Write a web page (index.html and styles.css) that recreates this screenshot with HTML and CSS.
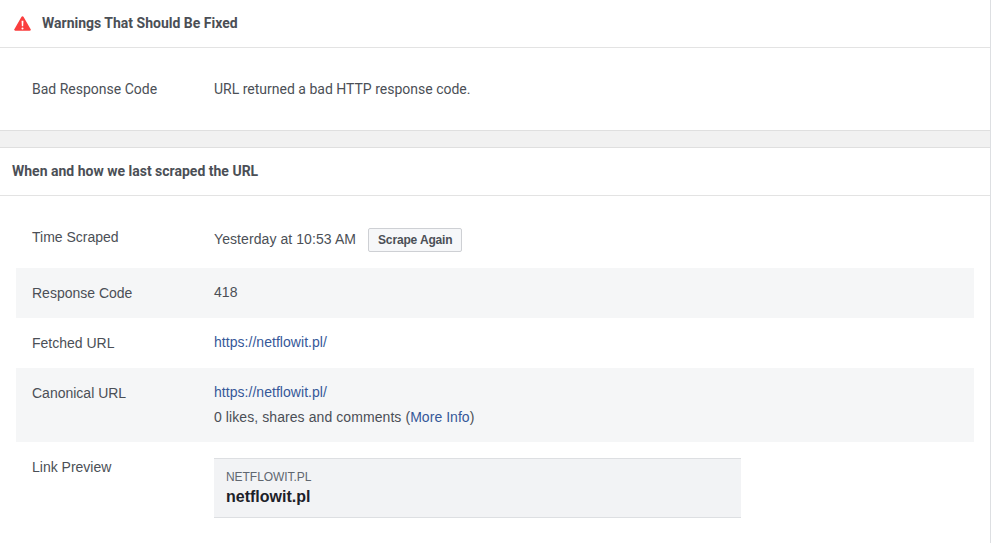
FILE: index.html
```html
<!DOCTYPE html>
<html lang="en">
<head>
<meta charset="utf-8">
<title>Sharing Debugger</title>
<link rel="stylesheet" href="styles.css">
</head>
<body>
<main class="panel">
  <section class="card">
    <h2 class="card-head warn-head">
      <svg class="warn-icon" width="17" height="15" viewBox="0 0 18 16" aria-hidden="true">
        <path fill="#fa3e3e" fill-rule="evenodd" d="M9 0.3c.5 0 .9.3 1.2.8l7.5 13c.5.9 0 1.6-1 1.6H1.3c-1 0-1.5-.7-1-1.6l7.5-13C8.100.6 8.500.3 9 .3zM8 5l.3 6h1.400L10 5H8zm1 7.200a1.100 1.100 0 1 0 0 2.200 1.100 1.100 0 0 0 0-2.200z"/>
      </svg>
      Warnings That Should Be Fixed
    </h2>
    <div class="warn-body">
      <div class="warn-label">Bad Response Code</div>
      <div class="warn-text">URL returned a bad HTTP response code.</div>
    </div>
  </section>
  <div class="divider"></div>
  <section class="card">
    <h2 class="card-head">When and how we last scraped the URL</h2>
    <div class="table">
      <div class="row first">
        <div class="label">Time Scraped</div>
        <div class="value">Yesterday at 10:53 AM <button class="btn">Scrape Again</button></div>
      </div>
      <div class="row alt">
        <div class="label">Response Code</div>
        <div class="value">418</div>
      </div>
      <div class="row">
        <div class="label">Fetched URL</div>
        <div class="value"><a href="#">https://netflowit.pl/</a></div>
      </div>
      <div class="row alt">
        <div class="label">Canonical URL</div>
        <div class="value">
          <div><a href="#">https://netflowit.pl/</a></div>
          <div class="line2">0 likes, shares and comments (<a href="#">More Info</a>)</div>
        </div>
      </div>
      <div class="row last">
        <div class="label">Link Preview</div>
        <div class="preview">
          <div class="domain">NETFLOWIT.PL</div>
          <div class="title">netflowit.pl</div>
        </div>
      </div>
    </div>
  </section>
</main>
</body>
</html>
```
FILE: styles.css
```css
html, body {
  margin: 0;
  padding: 0;
  background: #fff;
}
body {
  height: 543px;
  overflow: hidden;
  font-family: "Liberation Sans", Arial, sans-serif;
  font-size: 14px;
  color: #4b4f56;
}
.panel {
  width: 990px;
  height: 543px;
  border-right: 1px solid #dddfe2;
}
.card-head {
  display: flex;
  align-items: center;
  height: 46px;
  margin: 0;
  padding: 0 12px 1px;
  border-bottom: 1px solid #e3e3e3;
  font-family: Roboto, sans-serif;
  font-size: 14px;
  font-weight: 700;
  color: #4b4f56;
}
.warn-head {
  padding-left: 14px;
}
.warn-icon {
  margin-right: 11px;
  flex: none;
}
.warn-body {
  display: flex;
  align-items: center;
  height: 82px;
  padding-left: 32px;
  font-family: Roboto, sans-serif;
}
.warn-label {
  width: 182px;
}
.divider {
  height: 16px;
  background: #f1f1f1;
  border-top: 1px solid #dfdfdf;
  border-bottom: 1px solid #dfdfdf;
}
.table {
  margin: 0 16px;
  padding-top: 24px;
}
.row {
  display: flex;
  min-height: 50px;
  box-sizing: border-box;
  padding: 15px 16px 0;
  line-height: 18px;
}
.row.first {
  min-height: 48px;
  padding-top: 8px;
}
.row.alt {
  background: #f5f6f7;
}
.row.last {
  padding-top: 16px;
}
.label {
  width: 182px;
  flex: none;
  padding-top: 1px;
}
.row.first .label,
.row.last .label {
  padding-top: 0;
}
.value {
  color: #4b4f56;
  letter-spacing: 0.08px;
}
.row.alt .value {
  padding-bottom: 16px;
}
a {
  color: #365899;
  text-decoration: none;
  letter-spacing: 0.04px;
}
.line2 {
  margin-top: 7px;
}
.btn {
  margin-left: 8px;
  height: 24px;
  padding: 0 9px;
  box-sizing: border-box;
  vertical-align: middle;
  background: #f6f7f9;
  border: 1px solid #ced0d4;
  border-radius: 2px;
  font-family: "Liberation Sans", Arial, sans-serif;
  font-size: 12px;
  font-weight: 700;
  letter-spacing: -0.15px;
  color: #4b4f56;
}
.preview {
  width: 527px;
  height: 60px;
  box-sizing: border-box;
  padding: 10px 12px 0;
  background: #f2f3f5;
  border-top: 1px solid #dddfe2;
  border-bottom: 1px solid #dddfe2;
}
.domain {
  font-size: 12px;
  line-height: 16px;
  letter-spacing: -0.05px;
  color: #606770;
}
.title {
  margin-top: 2px;
  font-size: 16px;
  line-height: 20px;
  font-weight: 700;
  color: #1d2129;
}
```
